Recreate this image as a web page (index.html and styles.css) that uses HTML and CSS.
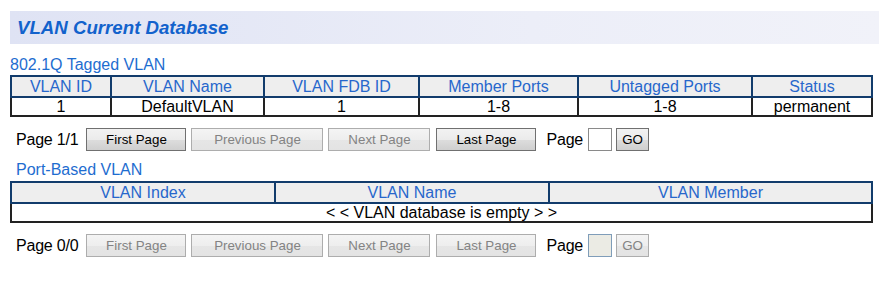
FILE: index.html
```html
<!DOCTYPE html>
<html>
<head>
<meta charset="utf-8">
<title>VLAN Current Database</title>
<link rel="stylesheet" href="styles.css">
</head>
<body>
<div class="page">
  <div class="title-bar"><h1 class="title">VLAN Current Database</h1></div>

  <div class="section-label first">802.1Q Tagged VLAN</div>
  <table class="grid tagged">
    <thead>
      <tr>
        <th class="c1">VLAN ID</th>
        <th class="c2">VLAN Name</th>
        <th class="c3">VLAN FDB ID</th>
        <th class="c4">Member Ports</th>
        <th class="c5">Untagged Ports</th>
        <th class="c6">Status</th>
      </tr>
    </thead>
    <tbody>
      <tr>
        <td>1</td>
        <td>DefaultVLAN</td>
        <td>1</td>
        <td>1-8</td>
        <td>1-8</td>
        <td>permanent</td>
      </tr>
    </tbody>
  </table>

  <div class="pager">
    <span class="pager-info">Page 1/1</span>
    <button class="btn w-first">First Page</button>
    <button class="btn w-prev" disabled>Previous Page</button>
    <button class="btn w-next" disabled>Next Page</button>
    <button class="btn w-last">Last Page</button>
    <span class="pager-label">Page</span>
    <input class="page-input" type="text">
    <button class="btn w-go">GO</button>
  </div>

  <div class="section-label second">Port-Based VLAN</div>
  <table class="grid port">
    <thead>
      <tr>
        <th class="p1">VLAN Index</th>
        <th class="p2">VLAN Name</th>
        <th class="p3">VLAN Member</th>
      </tr>
    </thead>
    <tbody>
      <tr>
        <td colspan="3">&lt; &lt; VLAN database is empty &gt; &gt;</td>
      </tr>
    </tbody>
  </table>

  <div class="pager">
    <span class="pager-info">Page 0/0</span>
    <button class="btn w-first" disabled>First Page</button>
    <button class="btn w-prev" disabled>Previous Page</button>
    <button class="btn w-next" disabled>Next Page</button>
    <button class="btn w-last" disabled>Last Page</button>
    <span class="pager-label">Page</span>
    <input class="page-input" type="text" disabled>
    <button class="btn w-go" disabled>GO</button>
  </div>
</div>
</body>
</html>
```

FILE: styles.css
```css
html, body {
  margin: 0;
  padding: 0;
  background: #ffffff;
}

body {
  font-family: "Liberation Sans", Arial, sans-serif;
  font-size: 16px;
  color: #000;
}

.page {
  padding: 11px 0 0 10px;
}

.title-bar {
  width: 869px;
  height: 33px;
  background: linear-gradient(to right, #dfe3f4, #eceef8 60%, #f1f2f9);
  display: flex;
  align-items: center;
}

.title {
  margin: 0 0 0 7px;
  font-size: 18.67px;
  font-weight: bold;
  font-style: italic;
  color: #1262cc;
  line-height: 22px;
}

.section-label {
  font-size: 16px;
  line-height: 20px;
  color: #1e6dd0;
}

.section-label.first {
  margin-top: 11px;
  margin-bottom: 0;
}

.section-label.second {
  margin-top: 9px;
  margin-bottom: 1px;
  padding-left: 6px;
}

.grid {
  border-collapse: collapse;
  border: 2px solid #222;
  width: 863px;
  table-layout: fixed;
}

.grid th {
  border: 2px solid #123c6c;
  background: #eeeeee;
  color: #2767cc;
  font-weight: normal;
  font-size: 16px;
  line-height: 19px;
  padding: 0;
  text-align: center;
}

.grid td {
  border: 2px solid #222;
  background: #fff;
  font-size: 16px;
  line-height: 17px;
  padding: 0;
  text-align: center;
}

.tagged .c1 { width: 98px; }
.tagged .c2 { width: 151px; }
.tagged .c3 { width: 153px; }
.tagged .c4 { width: 157px; }
.tagged .c5 { width: 172px; }
.tagged .c6 { width: auto; }

.port .p1 { width: 262px; }
.port .p2 { width: 272px; }
.port .p3 { width: auto; }

.pager {
  display: flex;
  align-items: center;
  height: 23px;
  margin-top: 11px;
  padding-left: 6px;
}

.pager-info {
  font-size: 16px;
  margin-right: 8px;
  letter-spacing: -0.2px;
}

.pager-label {
  font-size: 16px;
  margin-left: 4px;
  margin-right: 5px;
  letter-spacing: -0.2px;
}

.btn {
  height: 23px;
  margin: 0 5px 0 0;
  padding: 0;
  font-family: "Liberation Sans", Arial, sans-serif;
  font-size: 13.33px;
  color: #000;
  border: 1px solid #707070;
  border-radius: 0;
  background: linear-gradient(#f2f2f2, #ebebeb 50%, #dddddd 51%, #cfcfcf);
  box-sizing: border-box;
}

.btn:disabled {
  color: #838383;
  border-color: #adadad;
  background: linear-gradient(#f4f4f4, #eeeeee 50%, #e6e6e6 51%, #e3e3e3);
}

.w-first { width: 100px; }
.w-prev { width: 132px; }
.w-next { width: 102px; margin-right: 6px; }
.w-last { width: 100px; margin-right: 6px; }
.w-go { width: 33px; margin-right: 0; }

.page-input {
  width: 24px;
  height: 23px;
  box-sizing: border-box;
  margin: 0 4px 0 0;
  padding: 0;
  border: 1px solid #8a8a8a;
  background: #fff;
  font-size: 13px;
}

.page-input:disabled {
  background: #ebebe4;
  border-color: #7f9db9;
}
```
